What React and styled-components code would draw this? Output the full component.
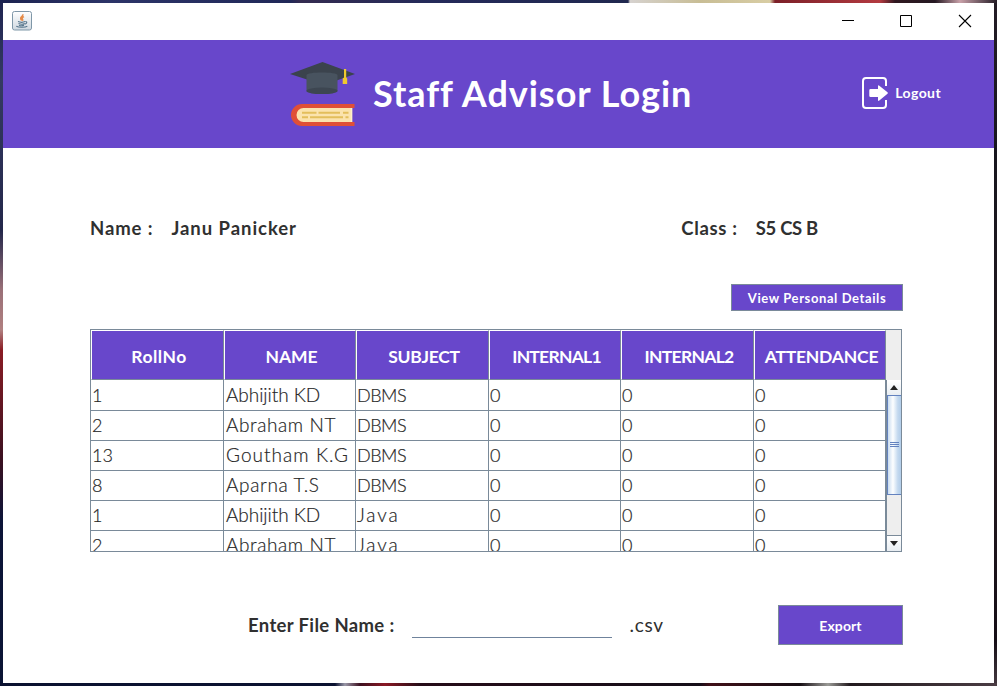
import React from 'react';
import styled, { createGlobalStyle } from 'styled-components';

const purple = '#6847cb';
const line = '#7a8a99';

const GlobalStyle = createGlobalStyle`
  *, *::before, *::after { box-sizing: border-box; }
  body { margin: 0; font-family: "Lato", "Open Sans", sans-serif; }
  button, input { font-family: inherit; }
`;

const Desktop = styled.div`
  width: 997px;
  height: 686px;
  padding: 3px;
  overflow: hidden;
  background:
    linear-gradient(90deg, #1c2350 0, #2c3468 110px, #202858 290px, #342b50 300px, #242a5a 430px, #20284f 628px, #d6d2cf 630px, #c8bd95 700px, #d8cda4 770px, #7c2028 775px, #b33a40 880px, #301820 895px, #251822 935px, #c8a0a8 960px, #241c26 997px) 0 0 / 997px 3px no-repeat,
    linear-gradient(90deg, #0b1230 0, #0b1230 335px, #9a98a8 345px, #3c1020 360px, #8a1824 385px, #260c18 420px, #150e18 700px, #401018 710px, #160e14 800px, #9a9a96 828px, #221a1e 850px, #4b3d44 997px) 0 683px / 997px 3px no-repeat,
    linear-gradient(180deg, #1e2450 0, #343a62 80px, #23274a 230px, #9a7078 290px, #b08080 330px, #8a1c24 350px, #3a1020 460px, #0c1438 520px, #0a1434 686px) 0 0 / 3px 686px no-repeat,
    linear-gradient(180deg, #241c26 0, #17161e 150px, #251a20 450px, #150e16 640px, #453940 686px);
`;

const Window = styled.div`
  width: 991px;
  height: 680px;
  display: flex;
  flex-direction: column;
  background: #fff;
`;

const TitleBar = styled.div`
  height: 37px;
  flex: none;
  display: flex;
  align-items: center;
  justify-content: space-between;
  padding: 0 22px 2px 9px;
`;

const WindowControls = styled.div`
  display: flex;
  gap: 45px;
  height: 14px;
`;

const Header = styled.header`
  height: 108px;
  flex: none;
  display: flex;
  align-items: center;
  padding: 0 53px 2px 287px;
  background: ${purple};
  color: #fff;
`;

const Title = styled.h1`
  margin: 0 0 0 18px;
  font-size: 36px;
  line-height: 44px;
  font-weight: 700;
  letter-spacing: 0.97px;
  white-space: nowrap;
`;

const LogoutButton = styled.button`
  display: flex;
  align-items: center;
  gap: 6px;
  margin-left: auto;
  padding: 0;
  border: 0;
  background: none;
  color: #fff;
  font-size: 14px;
  line-height: 18px;
  font-weight: 700;
  letter-spacing: 0.4px;
`;

const Content = styled.main`
  flex: 1;
  display: flex;
  flex-direction: column;
  padding: 68px 91px 0 87px;
`;

const InfoRow = styled.div`
  height: 24px;
  display: flex;
  align-items: center;
  justify-content: space-between;
  padding: 0 85px 0 0;
`;

const Field = styled.div`
  display: flex;
  gap: 18px;
`;

const Label = styled.span`
  color: #303030;
  font-size: ${(p) => p.$size || 18.5}px;
  line-height: 24px;
  font-weight: ${(p) => p.$weight || 700};
  letter-spacing: ${(p) => p.$track}px;
  white-space: nowrap;
`;

const ActionButton = styled.button`
  width: ${(p) => p.$width}px;
  height: ${(p) => p.$height}px;
  padding: 0;
  border: 1px solid ${line};
  background: ${purple};
  color: #fff;
  font-size: ${(p) => p.$size}px;
  font-weight: 700;
  letter-spacing: ${(p) => p.$track}px;
  white-space: nowrap;
`;

const ButtonRow = styled.div`
  display: flex;
  justify-content: flex-end;
  margin: 44px 0 18px;
`;

const ScrollPane = styled.div`
  width: 812px;
  height: 223px;
  display: grid;
  grid-template: 50px 171px / 795px 15px;
  border: 1px solid ${line};
  overflow: hidden;
`;

const columns = '133px 132px 133px 132px 133px 132px';

const HeadRow = styled.div`
  display: grid;
  grid-template-columns: ${columns};
`;

const HeadCell = styled.div`
  display: flex;
  align-items: center;
  justify-content: center;
  padding: 2px 0 0 3px;
  border: 1px solid;
  border-color: #fff ${line} ${line} #fff;
  background: ${purple};
  color: #fff;
  font-size: 17.5px;
  font-weight: 700;
  letter-spacing: ${(p) => p.$track}px;
  white-space: nowrap;
`;

const Corner = styled.div`
  background: #eee;
`;

const Viewport = styled.div`
  overflow: hidden;
`;

const Row = styled.div`
  display: grid;
  grid-template-columns: ${columns};
  height: 30px;
`;

const Cell = styled.div`
  padding-left: ${(p) => p.$pad || 1}px;
  border-right: 1px solid ${line};
  border-bottom: 1px solid ${line};
  color: #222;
  font-size: ${(p) => p.$size || 18}px;
  line-height: 30px;
  font-weight: 300;
  -webkit-text-stroke: 0.2px #333;
  letter-spacing: ${(p) => p.$track || 0}px;
  white-space: nowrap;
`;

const ScrollBar = styled.div`
  display: flex;
  flex-direction: column;
  border-left: 1px solid ${line};
  background: #eee;
`;

const ArrowButton = styled.div`
  height: ${(p) => (p.$down ? 16 : 15)}px;
  flex: none;
  display: flex;
  align-items: center;
  justify-content: center;
  padding-bottom: 1px;
  background: linear-gradient(#fff, #e8edf2);
  border-top: 1px solid ${(p) => (p.$down ? line : '#fff')};
`;

const Track = styled.div`
  flex: 1;
`;

const Thumb = styled.div`
  height: 100px;
  display: flex;
  align-items: center;
  justify-content: center;
  border: solid #6382bf;
  border-width: 1px 0 1px 1px;
  background: linear-gradient(90deg, #c9dcf0, #fdfeff 38%, #c4d9ef 75%, #b2cde9);
`;

const ExportRow = styled.div`
  height: 40px;
  display: flex;
  align-items: center;
  margin-top: 53px;
  padding-left: 158px;
`;

const FileInput = styled.input`
  width: 200px;
  height: 25px;
  margin: 0 18px 0 17px;
  padding: 0;
  border: 0;
  border-bottom: 1px solid #6f839c;
  outline: 0;
  background: transparent;
  font-size: 18px;
`;

const Push = styled.div`
  margin-left: auto;
`;

const JavaIcon = () => (
  <svg width="20" height="20" viewBox="0 0 20 20">
    <defs>
      <linearGradient id="java-tile" x2="0" y2="1">
        <stop stopColor="#fff" />
        <stop offset="1" stopColor="#cfd8e0" />
      </linearGradient>
    </defs>
    <rect x=".5" y=".5" width="19" height="18.5" rx="2" fill="url(#java-tile)" stroke="#7f97a8" />
    <path d="M10.8 3.2c.8 2-2.8 2.800-2.100 4.600.3.800.9 1.100.7 1.800M12 5.600c-1.800.8-2.300 1.500-1.500 2.500.5.700.3 1.200-.1 1.700" fill="none" stroke="#e58a48" strokeWidth="1.5" />
    <path d="M6 10.600c2 .8 5.500.700 7.200 0M6.500 12.500c1.700.8 4.700.8 6.200 0M7 14.200c1.500.6 3.800.6 5 0M13.500 10.600c2-.3 1.500 2.300-.7 2.500M4.300 15.300c2.500 1.300 9 1.200 11 0" fill="none" stroke="#56758c" strokeWidth="1.1" />
  </svg>
);

const GraduationArt = styled.svg`
  flex: none;
  margin-top: 4px;
`;

const GraduationIcon = () => (
  <GraduationArt width="65" height="66" viewBox="0 0 65 66">
    <path d="M0 12 32.500 0 65 12 34 23Z" fill="#3b434d" />
    <path d="M16.500 13c0-3.500 31-3.500 31 0v16c0 4-31 4-31 0Z" fill="#48535f" />
    <ellipse cx="32" cy="28.800" rx="15.500" ry="3.300" fill="#3d4651" />
    <path d="M54 7h2.200v8.500l1 1V22h-4.500v-5.500l1.300-1Z" fill="#f0c92f" />
    <path d="M64.500 42H12a11 11 0 0 0 0 22h52.500v-4H62V46h2.500Z" fill="#e04f36" />
    <path d="M62.200 46H13.500a7 7 0 0 0 0 14h48.700Z" fill="#fbe3ad" />
    <path d="M60.700 46h1.500v14h-1.500Z" fill="#fff0ca" />
    <path d="M12 50.800h14.500M28.500 50.800H50M53 50.800h5.500M12 55.200h6M20 55.200h33M55.500 55.200h3" stroke="#e3be5b" strokeWidth="2" />
  </GraduationArt>
);

const LogoutArt = styled.svg`
  margin-bottom: 1px;
`;

const LogoutIcon = () => (
  <LogoutArt width="27" height="32" viewBox="0 0 27 32" fill="none">
    <path d="M24 9V4Q24 1 21 1H4Q1 1 1 4V28Q1 31 4 31H21Q24 31 24 28V23" stroke="#fff" strokeWidth="2" />
    <path d="M8.500 12H16V9.200Q16 7.600 17.300 8.800L25.500 15.300Q26.300 16 25.500 16.700L17.300 23.600Q16 24.600 16 23V20H8.500Q7.300 20 7.300 18.800V13.200Q7.300 12 8.500 12Z" fill="#fff" />
  </LogoutArt>
);

const heads = [
  ['RollNo', 0.5],
  ['NAME', -0.1],
  ['SUBJECT', -0.25],
  ['INTERNAL1', -0.75],
  ['INTERNAL2', -0.7],
  ['ATTENDANCE', -0.2],
];

const abhijith = ['Abhijith KD', -0.05];
const abraham = ['Abraham NT', 0.6];
const dbms = { text: 'DBMS', track: -0.5, size: 18 };
const java = { text: 'Java', track: 1.9, size: 19 };

const rows = [
  ['1', abhijith, dbms],
  ['2', abraham, dbms],
  ['13', ['Goutham K.G', 1.05], dbms],
  ['8', ['Aparna T.S', 0.65], dbms],
  ['1', abhijith, java],
  ['2', abraham, java],
];

export default function App() {
  return (
    <>
      <GlobalStyle />
      <Desktop>
        <Window>
          <TitleBar>
            <JavaIcon />
            <WindowControls>
              <svg width="14" height="14"><path d="M2 6.500h12" stroke="#000" /></svg>
              <svg width="14" height="14"><path d="M1.500 1.500h11v11h-11z" fill="none" stroke="#000" /></svg>
              <svg width="14" height="14"><path d="M1 1l12 12M13 1 1 13" stroke="#000" strokeWidth="1.100" /></svg>
            </WindowControls>
          </TitleBar>
          <Header>
            <GraduationIcon />
            <Title>Staff Advisor Login</Title>
            <LogoutButton>
              <LogoutIcon />
              Logout
            </LogoutButton>
          </Header>
          <Content>
            <InfoRow>
              <Field>
                <Label $track={0.9}>Name :</Label>
                <Label $track={0.95}>Janu Panicker</Label>
              </Field>
              <Field>
                <Label $track={0.65}>Class :</Label>
                <Label $track={-0.3}>S5 CS B</Label>
              </Field>
            </InfoRow>
            <ButtonRow>
              <ActionButton $width={172} $height={27} $size={13} $track={0.6}>View Personal Details</ActionButton>
            </ButtonRow>
            <ScrollPane>
              <HeadRow>
                {heads.map(([name, track]) => (
                  <HeadCell key={name} $track={track}>{name}</HeadCell>
                ))}
              </HeadRow>
              <Corner />
              <Viewport>
                {rows.map(([roll, [name, track], subject], i) => (
                  <Row key={i}>
                    <Cell>{roll}</Cell>
                    <Cell $track={track} $size={19} $pad={2}>{name}</Cell>
                    <Cell $track={subject.track} $size={subject.size}>{subject.text}</Cell>
                    <Cell>0</Cell>
                    <Cell>0</Cell>
                    <Cell>0</Cell>
                  </Row>
                ))}
              </Viewport>
              <ScrollBar>
                <ArrowButton>
                  <svg width="10" height="5"><path d="M1 5 5 0 9 5Z" fill="#222" /></svg>
                </ArrowButton>
                <Track>
                  <Thumb>
                    <svg width="9" height="6"><path d="M0 .5h9M0 2.500h9M0 4.500h9" stroke="#6382bf" /></svg>
                  </Thumb>
                </Track>
                <ArrowButton $down>
                  <svg width="10" height="5"><path d="M1 0 5 5 9 0Z" fill="#222" /></svg>
                </ArrowButton>
              </ScrollBar>
            </ScrollPane>
            <ExportRow>
              <Label $track={0.35}>Enter File Name :</Label>
              <FileInput aria-label="File name" />
              <Label $weight={400} $size={19} $track={0.7}>.csv</Label>
              <Push>
                <ActionButton $width={125} $height={40} $size={14} $track={0.1}>Export</ActionButton>
              </Push>
            </ExportRow>
          </Content>
        </Window>
      </Desktop>
    </>
  );
}
